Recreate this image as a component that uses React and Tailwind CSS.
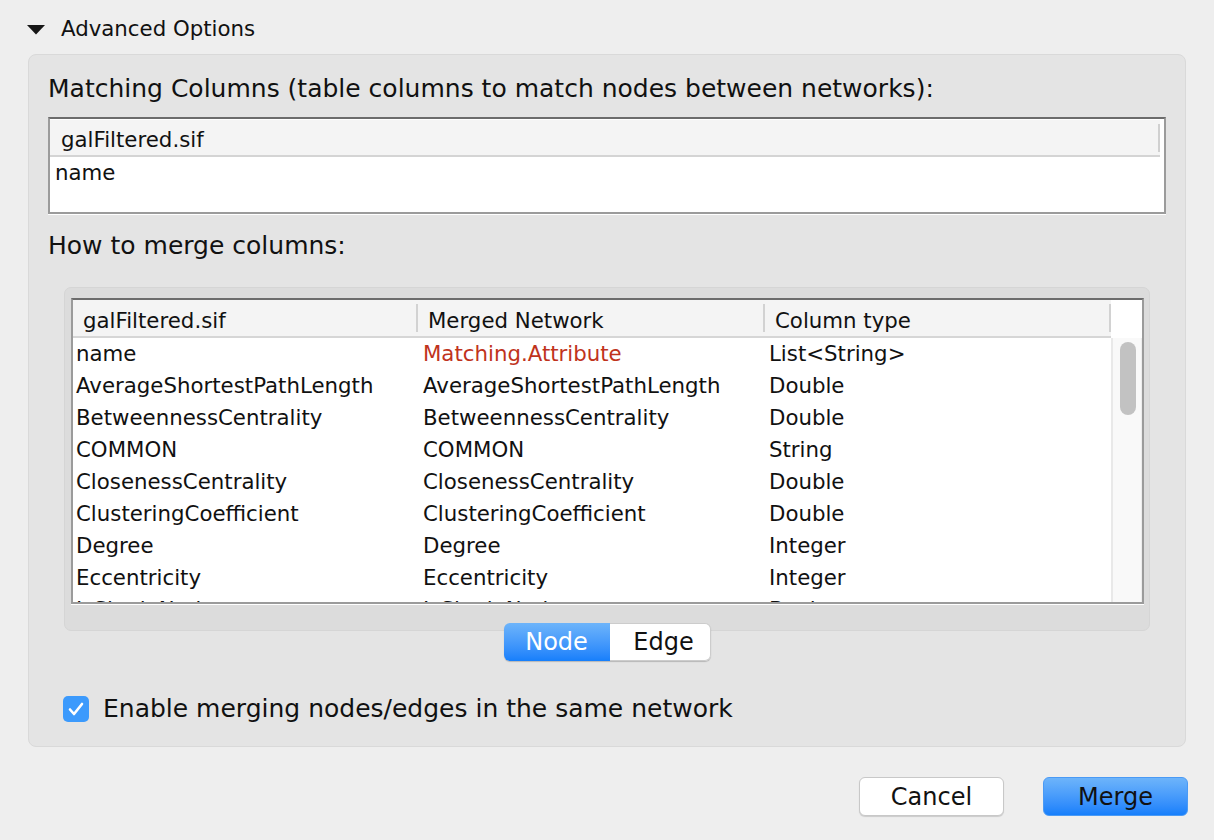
import React from "react";

const rows = [
  ["name", "Matching.Attribute", "List<String>", true],
  ["AverageShortestPathLength", "AverageShortestPathLength", "Double"],
  ["BetweennessCentrality", "BetweennessCentrality", "Double"],
  ["COMMON", "COMMON", "String"],
  ["ClosenessCentrality", "ClosenessCentrality", "Double"],
  ["ClusteringCoefficient", "ClusteringCoefficient", "Double"],
  ["Degree", "Degree", "Integer"],
  ["Eccentricity", "Eccentricity", "Integer"],
  ["IsSingleNode", "IsSingleNode", "Boolean"],
];

function HeaderCell({ label, width }) {
  return (
    <div className={`flex items-center justify-between h-full ${width}`}>
      <span className="pl-[10px] pt-[6px]">{label}</span>
      <span className="w-[2px] h-[28px] bg-[#d2d2d2]" />
    </div>
  );
}

export default function App() {
  return (
    <div
      className="w-[1214px] h-[840px] bg-[#eeeeee] overflow-hidden text-[#111111]"
      style={{ fontFamily: '"DejaVu Sans", "Noto Sans", sans-serif' }}
    >
      {/* Advanced Options header */}
      <div className="pt-[15px] pl-[27px] flex items-center h-[42px] gap-[16px]">
        <svg width="18" height="10" viewBox="0 0 18 10" className="mt-[3px]">
          <polygon points="0,0 18,0 9,9.5" fill="#161616" />
        </svg>
        <span className="text-[21.3px] leading-[28px]">Advanced Options</span>
      </div>

      {/* Main panel */}
      <div className="mt-[12px] ml-[28px] w-[1158px] h-[693px] bg-[#e4e4e4] border border-[#d9d9d9] rounded-[8px] pl-[19px] pr-[19px] pt-[19px] flex flex-col">
        <div className="h-[30px] leading-[30px] text-[25px]">
          Matching Columns (table columns to match nodes between networks):
        </div>

        {/* Matching table */}
        <div className="mt-[13px] w-[1118px] h-[97px] bg-white border-2 border-[#9b9b9b] border-t-[#6c6c6c] shadow-[0_1px_0_#ffffff] flex flex-col pt-[1px]">
          <div className="flex h-[37px] text-[21.3px]">
            <div className="w-[1110px] h-full bg-[#f4f4f4] border-b-2 border-[#d4d4d4] flex items-center justify-between">
              <span className="pl-[11px] pt-[4px]">galFiltered.sif</span>
              <span className="w-[2px] h-[28px] bg-[#d0d0d0]" />
            </div>
          </div>
          <div className="h-[30px] leading-[30px] text-[21.3px] pl-[5px] pt-[1px]">name</div>
        </div>

        <div className="mt-[17px] h-[30px] leading-[30px] text-[25px]">How to merge columns:</div>

        {/* Inner gray panel */}
        <div className="mt-[26px] ml-[16px] w-[1086px] h-[344px] bg-[#dcdcdc] border border-[#d5d5d5] rounded-[7px] pt-[10px] pl-[6px]">
          <div className="w-[1073px] h-[306px] bg-white border-2 border-[#9b9b9b] border-t-[#6c6c6c] shadow-[0_1px_0_#ffffff] flex overflow-hidden">
            <div className="w-[1038px] h-full flex flex-col overflow-hidden">
              <div className="flex h-[38px] shrink-0 bg-[#f4f4f4] border-b-2 border-[#d6d6d6] text-[21.3px]">
                <HeaderCell label="galFiltered.sif" width="w-[345px]" />
                <HeaderCell label="Merged Network" width="w-[347px]" />
                <HeaderCell label="Column type" width="w-[346px]" />
              </div>
              {rows.map(([a, b, c, red]) => (
                <div key={a} className="flex h-[32px] shrink-0 items-center text-[21.3px] leading-[32px]">
                  <div className="w-[345px] pl-[3px] whitespace-nowrap">{a}</div>
                  <div className={`w-[347px] pl-[5px] whitespace-nowrap ${red ? "text-[#c0331c]" : ""}`}>{b}</div>
                  <div className="w-[346px] pl-[4px] whitespace-nowrap">{c}</div>
                </div>
              ))}
            </div>
            <div className="w-[31px] h-full flex flex-col">
              <div className="h-[38px] shrink-0 bg-white" />
              <div className="flex-1 bg-[#f9f9f9] border-l-2 border-[#e9e9e9] border-r border-r-[#ededed] pt-[4px] pl-[7px]">
                <div className="w-[16px] h-[73px] rounded-full bg-[#c2c2c2]" />
              </div>
            </div>
          </div>
        </div>

        {/* Segmented control */}
        <div className="relative z-10 -mt-[8px] flex justify-center">
          <div className="flex h-[38px] rounded-[6px] shadow-[0_1px_1px_rgba(0,0,0,0.2)]">
            <div className="w-[106px] h-full rounded-l-[6px] bg-gradient-to-b from-[#6db4fa] to-[#157ffb] text-white text-[24px] flex items-center justify-center">
              Node
            </div>
            <div className="w-[101px] h-full rounded-r-[6px] bg-white border border-l-0 border-[#cccccc] text-[24px] flex items-center justify-center pl-[8px]">
              Edge
            </div>
          </div>
        </div>

        {/* Checkbox */}
        <div className="mt-[35px] ml-[15px] flex items-center h-[26px] gap-[14px]">
          <div className="w-[26px] h-[26px] rounded-[5px] bg-[#3c9afc] flex items-center justify-center">
            <svg width="16" height="14" viewBox="0 0 16 14">
              <polyline points="2,7.5 6,12 14,2" fill="none" stroke="white" strokeWidth="2.6" strokeLinecap="round" strokeLinejoin="round" />
            </svg>
          </div>
          <span className="text-[25px] leading-[30px]">Enable merging nodes/edges in the same network</span>
        </div>
      </div>

      {/* Footer buttons */}
      <div className="mt-[30px] pr-[26px] flex justify-end gap-[39px]">
        <div className="w-[145px] h-[39px] rounded-[6px] bg-white border border-[#c8c8c8] shadow-[0_1px_1px_rgba(0,0,0,0.15)] text-[24px] flex items-center justify-center">
          Cancel
        </div>
        <div className="w-[145px] h-[39px] rounded-[6px] bg-gradient-to-b from-[#6db4fa] to-[#157ffb] border border-[#4a9af5] text-[24px] flex items-center justify-center">
          Merge
        </div>
      </div>
    </div>
  );
}
